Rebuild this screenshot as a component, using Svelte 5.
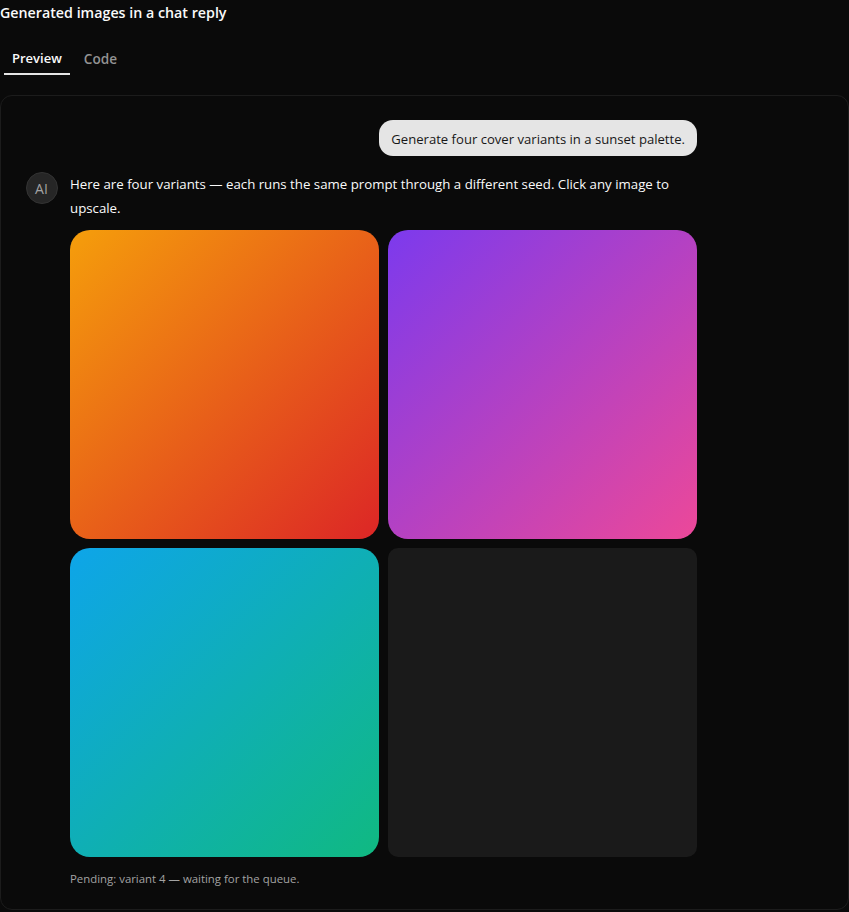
<script>
  let activeTab = $state('Preview');
  const tabs = ['Preview', 'Code'];
  const variants = ['v1', 'v2', 'v3', 'pending'];
</script>

<div class="page">
  <h1>Generated images in a chat reply</h1>

  <div class="tabs">
    {#each tabs as tab}
      <button class:active={activeTab === tab} onclick={() => (activeTab = tab)}>{tab}</button>
    {/each}
  </div>

  <div class="panel">
    <div class="thread">
      <div class="bubble">Generate four cover variants in a sunset palette.</div>

      <div class="reply">
        <div class="avatar">AI</div>
        <div class="body">
          <p>Here are four variants — each runs the same prompt through a different seed. Click any image to upscale.</p>
          <div class="grid">
            {#each variants as v}
              <div class="tile {v}"></div>
            {/each}
          </div>
          <p class="note">Pending: variant 4 — waiting for the queue.</p>
        </div>
      </div>
    </div>
  </div>
</div>

<style>
  :global(body) {
    background: #0a0a0a;
  }

  .page {
    font-family: "Open Sans", "Noto Sans", sans-serif;
    color: #fafafa;
    height: 912px;
    box-sizing: border-box;
    overflow: hidden;
  }

  h1 {
    margin: 0;
    font-size: 14.25px;
    line-height: 26px;
    font-weight: 600;
  }

  .tabs {
    display: flex;
    gap: 6px;
    margin: 11px 0 20px 4px;
    height: 38px;
    align-items: flex-end;
  }

  button {
    background: none;
    border: none;
    border-bottom: 2px solid transparent;
    padding: 0 8px;
    height: 32px;
    font: 600 13.6px "Open Sans", "Noto Sans", sans-serif;
    color: #939393;
  }

  button.active {
    font-size: 13px;
    color: #fafafa;
    border-bottom-color: #e5e5e5;
  }

  .panel {
    border: 1px solid #1c1c1c;
    border-radius: 12px;
    padding: 24px;
    height: 815px;
    box-sizing: border-box;
  }

  .thread {
    width: 672px;
    display: flex;
    flex-direction: column;
    gap: 16px;
  }

  .bubble {
    align-self: flex-end;
    background: #e5e5e5;
    color: #171717;
    font-size: 13.1px;
    line-height: 20px;
    padding: 9px 12px 7px;
    border-radius: 14px;
  }

  .reply {
    display: flex;
    gap: 12.5px;
  }

  .avatar {
    flex: none;
    width: 32px;
    height: 32px;
    margin-left: 0.5px;
    box-sizing: border-box;
    border-radius: 50%;
    background: #262626;
    border: 1px solid #333;
    color: #a3a3a3;
    font-size: 14px;
    display: flex;
    align-items: center;
    justify-content: center;
  }

  .body {
    flex: 1;
    min-width: 0;
  }

  p {
    margin: 0;
    font-size: 13.25px;
    line-height: 24px;
  }

  .grid {
    margin-top: 10px;
    display: grid;
    grid-template-columns: 1fr 1fr;
    gap: 9px;
  }

  .tile {
    aspect-ratio: 1;
    border-radius: 20px;
  }

  .v1 {
    background: linear-gradient(135deg, #f59e0b, #dc2626);
  }

  .v2 {
    background: linear-gradient(135deg, #7c3aed, #ec4899);
  }

  .v3 {
    background: linear-gradient(135deg, #0ea5e9, #10b981);
  }

  .pending {
    background: #1a1a1a;
    border-radius: 10px;
  }

  p.note {
    margin-top: 12px;
    font-size: 11.4px;
    line-height: 20px;
    color: #a3a3a3;
  }
</style>
